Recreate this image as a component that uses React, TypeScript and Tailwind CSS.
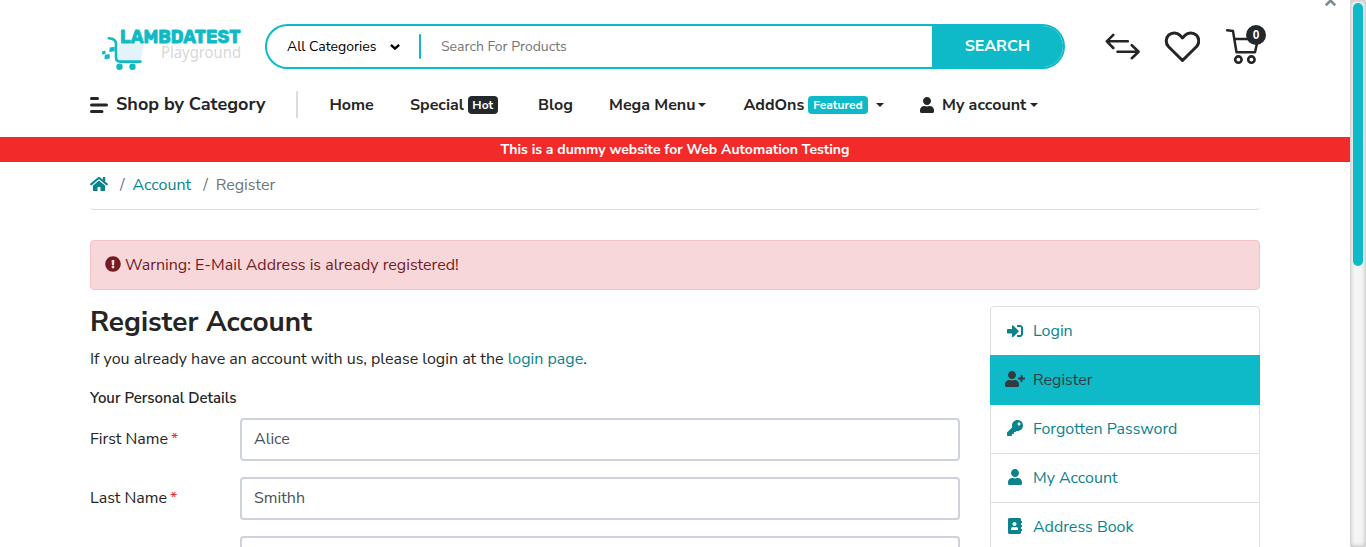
import type { ReactNode } from "react";
import { FaAddressBook, FaExclamationCircle, FaHome, FaKey, FaSignInAlt, FaUser, FaUserPlus } from "react-icons/fa";

function Logo() {
  return (
    <svg width="150" height="50" viewBox="0 0 150 50" className="block">
      <path d="M18 19.500H42.500L40 36H16Z" fill="#e3f3fb" />
      <path d="M7.800 14.200c5 .3 7.200 1.600 7.200 5.300V33.500c0 2.800 1.200 4.100 4 4.100H39.500" fill="none" stroke="#0ebac5" strokeWidth="2.600" strokeLinecap="round" />
      <g fill="#0ebac5">
        <path d="m8.800 23.500 4.800-.8v4.600l-5.400.8zM3.800 30.800l4.900-.8v4.500l-5.200.8zM1.200 27.200l3.300-.5v3.300l-3.500.5z" />
        <circle cx="18.500" cy="42.800" r="3.200" />
        <circle cx="31.500" cy="42.800" r="3.200" />
      </g>
      <text x="19" y="18.600" textLength="120.500" lengthAdjust="spacingAndGlyphs" fill="#0ebac5" stroke="#0ebac5" strokeWidth=".8" fontFamily="Rubik, Roboto, sans-serif" fontWeight="700" fontSize="18.800">LAMBDATEST</text>
      <text x="60" y="34" textLength="80" lengthAdjust="spacingAndGlyphs" fill="#d8d8d8" fontFamily="Noto Sans, sans-serif" fontSize="15.500">Playground</text>
    </svg>
  );
}

function Caret() {
  return <span className="mt-px inline-block border-x-4 border-t-4 border-x-transparent border-t-[#252525]" />;
}

function HeaderIcons() {
  return (
    <div className="flex">
      <svg width="40" height="48" viewBox="0 0 40 48" fill="none" stroke="#252525" strokeWidth="2.600" strokeLinecap="round" strokeLinejoin="round">
        <path d="M13.300 12.800 6.800 19.300l6.500 6.700M6.800 19.300H27.800M31.800 23.200l6.800 6.600-6.800 6.400M38.600 29.800H17.500" />
      </svg>
      <svg width="60" height="48" viewBox="0 0 60 48" fill="none" stroke="#252525" strokeWidth="3" strokeLinejoin="round">
        <path d="M42.500 38.500 28.400 24.500C25.500 21.300 25.500 16.200 28.600 13.200c3.300-3.200 8.400-3 11.500.2L42.500 16l2.400-2.600c3.100-3.200 8.200-3.400 11.500-.2 3.100 3 3.100 8.100.2 11.300Z" />
      </svg>
      <div className="relative h-12 w-[60px]">
        <svg width="60" height="48" viewBox="0 0 60 48" fill="none" stroke="#252525" strokeWidth="2.500" strokeLinecap="round" strokeLinejoin="round">
          <path d="M27.200 8.300 33 9.100 36.500 30.200H55L58 17H35" />
          <circle cx="38.400" cy="37.600" r="3.200" strokeWidth="2.600" />
          <circle cx="51.400" cy="37.600" r="3.200" strokeWidth="2.600" />
        </svg>
        <span className="absolute top-[3px] left-[46px] flex size-5 items-center justify-center rounded-full bg-[#23282b] font-['Liberation_Sans',sans-serif] text-[12px] font-bold text-white">0</span>
      </div>
    </div>
  );
}

function Field({ label, value }: { label: string; value: string }) {
  return (
    <div className="mb-4 flex h-[43px] items-center">
      <label className="w-[150px] shrink-0 pb-0.5">
        {label}
        {label && <span className="ml-[3px] text-[#e02d3c]">*</span>}
      </label>
      <input readOnly value={value} className="h-[43px] min-w-0 flex-1 rounded-[4px] border-2 border-[#ced2da] bg-white px-3 pb-0.5 text-[#495057] outline-none" />
    </div>
  );
}

function SideItem({ icon, active, children }: { icon: ReactNode; active?: boolean; children: ReactNode }) {
  return (
    <a
      className={
        active
          ? "relative -mx-px flex h-[50px] items-center bg-[#0ebac7] pr-4 pl-[15px] text-[#343a40]"
          : "flex h-[49px] items-center border-t border-[#dfdfdf] px-3.5 text-[#0a838c] first:h-12 first:border-t-0 [.relative+&]:-mt-px [.relative+&]:border-transparent"
      }
    >
      <span className="flex w-5 justify-center text-base">{icon}</span>
      <span className="ml-2">{children}</span>
    </a>
  );
}

export default function App() {
  return (
    <div className="flex h-[547px] w-full overflow-hidden bg-white font-['Nunito_Sans',Lato,sans-serif] text-base leading-6 text-[#252525]">
      <div className="relative w-[1350px] shrink-0">
        <svg className="absolute top-0 left-[1325px]" width="11" height="8" viewBox="0 0 11 8" fill="none" stroke="#7c8a90" strokeWidth="2.600">
          <path d="M.8 5.200 5.500.6l4.700 4.600" />
        </svg>
        <header className="mx-auto w-[1170px] pt-6">
          <div className="flex h-[45px]">
            <div className="w-[175px] pl-[11px]">
              <Logo />
            </div>
            <div className="flex w-[800px] items-center overflow-hidden rounded-full border-2 border-[#0ebac7] text-sm">
              <span className="ml-5 w-[103px] text-black">All Categories</span>
              <svg width="10" height="6" viewBox="0 0 10 6" fill="none" stroke="#000" strokeWidth="2.400">
                <path d="M.9.9 5 4.600 9.100.9" />
              </svg>
              <span className="ml-[19px] h-[25px] w-0.5 rounded bg-[#0ebac7]" />
              <span className="ml-5 flex-1 text-[#757575]">Search For Products</span>
              <button className="h-full w-[131px] bg-[#0ebac7] pb-px text-base font-bold text-white">SEARCH</button>
            </div>
            <div className="-mt-0.5 ml-[35px]">
              <HeaderIcons />
            </div>
          </div>
          <nav className="mt-[22px] flex h-[27px] items-center font-bold">
            <svg width="18" height="16" viewBox="0 0 18 16" fill="none" stroke="#252525" strokeWidth="3" strokeLinecap="round">
              <path d="M1.500 1.500H7.500M1.500 8H16.500M1.500 14.500H12" />
            </svg>
            <span className="-mt-0.5 ml-2 w-[180px] text-lg">Shop by Category</span>
            <span className="h-[27px] w-0.5 bg-[#dcdcdc]" />
            <span className="ml-[31.5px] w-[80.5px]">Home</span>
            <span className="flex w-32 items-center gap-1">
              Special <span className="h-[18px] rounded-[4px] bg-[#23282b] px-[4.5px] text-[12px] leading-[18px] text-white">Hot</span>
            </span>
            <span className="w-[71px]">Blog</span>
            <span className="flex w-[134.5px] items-center gap-[3px]">
              Mega Menu <Caret />
            </span>
            <span className="flex w-[175.5px] items-center">
              AddOns
              <span className="ml-1 h-[18px] rounded-[4px] bg-[#0ebac7] px-[5px] text-[12px] leading-[18px] text-white">Featured</span>
              <span className="w-2" />
              <Caret />
            </span>
            <FaUser className="size-4" />
            <span className="ml-[7px] flex items-center gap-1">
              My account <Caret />
            </span>
          </nav>
        </header>
        <div className="mt-[19px] h-[25px] bg-[#f32a2a] text-center text-sm leading-[25px] font-bold text-white">This is a dummy website for Web Automation Testing</div>
        <main className="mx-auto w-[1170px]">
          <div className="flex h-12 items-center rounded-[4px] border-b border-[#dcdcdc] pb-0.5 text-[#0a838c]">
            <FaHome className="mb-0.5 h-4 w-[18px]" />
            <span className="ml-3 text-[#6c757d]">/</span>
            <span className="ml-2">Account</span>
            <span className="ml-3 text-[#6c757d]">/</span>
            <span className="ml-2 text-[#6c757d]">Register</span>
          </div>
          <div className="mt-[30px] flex h-[50px] items-center rounded-[4px] border border-[#f5c2c7] bg-[#f8d7da] px-3.5 text-[#721c24]">
            <FaExclamationCircle className="mr-1 mb-0.5 size-4" />
            Warning: E-Mail Address is already registered!
          </div>
          <div className="mt-4 flex gap-[30px]">
            <section className="w-[870px]">
              <h1 className="text-[28px] leading-8 font-bold">Register Account</h1>
              <p className="mt-[9px]">
                If you already have an account with us, please login at the <a className="text-[#0a838c]">login page</a>.
              </p>
              <h2 className="mt-[15px] mb-2 text-[15px] leading-6 font-semibold">Your Personal Details</h2>
              <Field label="First Name" value="Alice" />
              <Field label="Last Name" value="Smithh" />
              <Field label="" value="" />
            </section>
            <aside className="h-[300px] w-[270px] rounded-t-[4px] border border-[#dfdfdf]">
              <SideItem icon={<FaSignInAlt className="mb-px" />}>Login</SideItem>
              <SideItem active icon={<FaUserPlus className="mb-0.5 h-4 w-5" />}>Register</SideItem>
              <SideItem icon={<FaKey className="mb-0.5" />}>Forgotten Password</SideItem>
              <SideItem icon={<FaUser className="mb-0.5" />}>My Account</SideItem>
              <SideItem icon={<FaAddressBook className="mb-0.5" />}>Address Book</SideItem>
            </aside>
          </div>
        </main>
      </div>
      <div className="flex-1 rounded-[2px] bg-[#f5f5f5] px-[3px] pt-[3px] shadow-[inset_0_0_5px_rgba(0,0,0,0.3)]">
        <div className="h-[263px] rounded-full bg-[#0ebac7]" />
      </div>
    </div>
  );
}
